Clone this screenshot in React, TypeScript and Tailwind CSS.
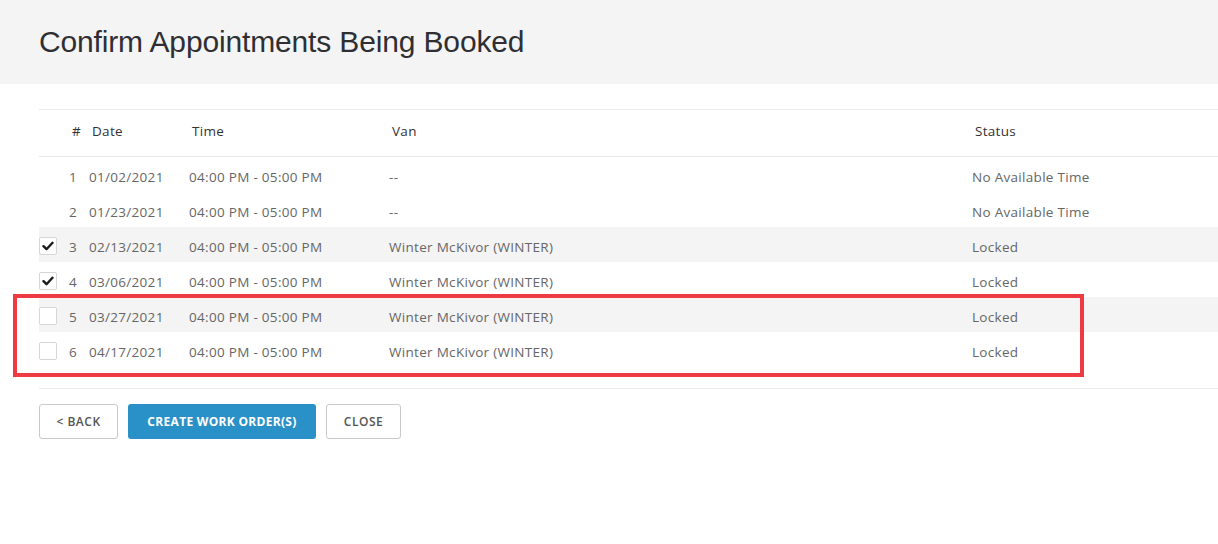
import React from "react";

type Appt = {
  n: number;
  date: string;
  van: string;
  status: string;
  selectable: boolean;
  checked: boolean;
  shaded: boolean;
};

const rows: Appt[] = [
  { n: 1, date: "01/02/2021", van: "--", status: "No Available Time", selectable: false, checked: false, shaded: false },
  { n: 2, date: "01/23/2021", van: "--", status: "No Available Time", selectable: false, checked: false, shaded: false },
  { n: 3, date: "02/13/2021", van: "Winter McKivor (WINTER)", status: "Locked", selectable: true, checked: true, shaded: true },
  { n: 4, date: "03/06/2021", van: "Winter McKivor (WINTER)", status: "Locked", selectable: true, checked: true, shaded: false },
  { n: 5, date: "03/27/2021", van: "Winter McKivor (WINTER)", status: "Locked", selectable: true, checked: false, shaded: true },
  { n: 6, date: "04/17/2021", van: "Winter McKivor (WINTER)", status: "Locked", selectable: true, checked: false, shaded: false },
];

function Checkbox({ checked }: { checked: boolean }) {
  return (
    <span className="flex h-[18px] w-[18px] items-center justify-center rounded-[2px] border border-[#d6d6d6] bg-white">
      {checked && (
        <svg width="12" height="10" viewBox="0 0 12 10">
          <path d="M1.5 5.2 L4.5 8.2 L10.5 1.8" fill="none" stroke="#1a1a1a" strokeWidth="2.4" strokeLinecap="round" strokeLinejoin="round" />
        </svg>
      )}
    </span>
  );
}

export default function App() {
  return (
    <div className="min-h-[544px] w-full bg-white text-[#333]" style={{ fontFamily: '"Open Sans", "Liberation Sans", sans-serif' }}>
      <div className="flex h-[84px] items-center bg-[#f4f4f4] pl-[39px]">
        <h1
          className="pb-[1px] text-[30px] font-light tracking-[-0.15px] text-[#2f2f33]"
          style={{ fontFamily: '"Liberation Sans", Arial, sans-serif' }}
        >
          Confirm Appointments Being Booked
        </h1>
      </div>

      <div className="relative pl-[39px] pt-[25px]">
        <div className="border-t border-[#ebebeb]">
          {/* column headings */}
          <div className="flex h-[47px] items-center border-b border-[#e8e8e8] pb-[3px] text-[13.5px] tracking-[0.3px] text-[#333]">
            <div className="w-[30px]" />
            <div className="w-[20px] pl-[3px]">#</div>
            <div className="w-[100px] pl-[3px]">Date</div>
            <div className="w-[200px] pl-[3px]">Time</div>
            <div className="w-[583px] pl-[3px]">Van</div>
            <div className="pl-[3px]">Status</div>
          </div>

          {rows.map((r) => (
            <div
              key={r.n}
              className={`flex h-[35px] items-center pt-[5px] text-[13.5px] tracking-[0.3px] text-[#666] ${r.shaded ? "bg-[#f4f4f4]" : "bg-white"}`}
            >
              <div className="w-[30px] -translate-y-[1px]">{r.selectable && <Checkbox checked={r.checked} />}</div>
              <div className="w-[20px]">{r.n}</div>
              <div className="w-[100px]">{r.date}</div>
              <div className="w-[200px]">04:00 PM - 05:00 PM</div>
              <div className="w-[583px]">{r.van}</div>
              <div>{r.status}</div>
            </div>
          ))}

          <div className="h-[22px] border-b border-[#ebebeb]" />
        </div>

        {/* highlight around the unchecked bookings */}
        <div className="pointer-events-none absolute left-[13px] top-[210px] h-[83px] w-[1071px] border-4 border-[#ee3a43]" />

        <div className="flex gap-[10px] pt-[15px]">
          <button className="flex h-[35px] w-[79px] items-center justify-center rounded-[3px] border border-[#c9c9c9] bg-white text-[12px] font-semibold tracking-[0.5px] text-[#555]">
            &lt; BACK
          </button>
          <button className="flex h-[35px] w-[188px] items-center justify-center rounded-[3px] bg-[#2a91c8] text-[12px] font-bold tracking-[0.3px] text-white">
            CREATE WORK ORDER(S)
          </button>
          <button className="flex h-[35px] w-[75px] items-center justify-center rounded-[3px] border border-[#c9c9c9] bg-white text-[12px] font-semibold tracking-[0.5px] text-[#555]">
            CLOSE
          </button>
        </div>
      </div>
    </div>
  );
}
